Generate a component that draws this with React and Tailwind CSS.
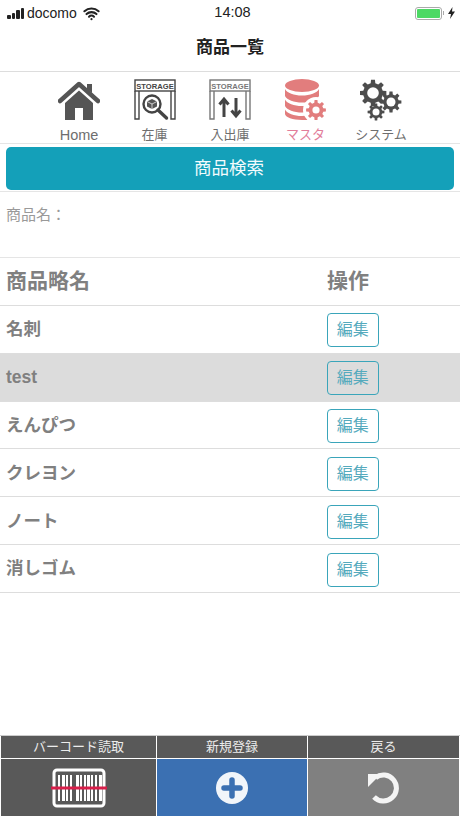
import { Wifi } from "lucide-react";

const font = { fontFamily: '"Liberation Sans", "Noto Sans CJK JP", sans-serif' };

const rows = [
  { name: "名刺" },
  { name: "test", active: true },
  { name: "えんぴつ" },
  { name: "クレヨン" },
  { name: "ノート" },
  { name: "消しゴム" },
];

function gearPath(cx, cy, outer, inner, teeth) {
  const pts = [];
  const step = (Math.PI * 2) / teeth;
  for (let i = 0; i < teeth; i++) {
    const a = i * step;
    const w = step * 0.22;
    pts.push([a - w * 1.35, inner], [a - w * 0.85, outer], [a + w * 0.85, outer], [a + w * 1.35, inner]);
  }
  return (
    pts
      .map(([a, r], i) => `${i ? "L" : "M"}${(cx + r * Math.cos(a)).toFixed(2)} ${(cy + r * Math.sin(a)).toFixed(2)}`)
      .join(" ") + " Z"
  );
}

function Gear({ cx, cy, r, hole, fill, holeFill = "#fff" }) {
  return (
    <>
      <path d={gearPath(cx, cy, r, r * 0.74, 8)} fill={fill} />
      <circle cx={cx} cy={cy} r={hole} fill={holeFill} />
    </>
  );
}

function HomeIcon() {
  return (
    <svg width="42" height="41" viewBox="0 0 42 41">
      <path d="M29 4h5v9l-5-4z" fill="#555" />
      <path d="M2 21 21 4l19 17" fill="none" stroke="#555" strokeWidth="4.500" strokeLinecap="round" strokeLinejoin="round" />
      <path d="M7 23 21 10.500 35 23v17H25V28h-8v12H7z" fill="#555" />
    </svg>
  );
}

function StorageFrame({ color, children }) {
  return (
    <svg width="42" height="42" viewBox="0 0 42 42">
      <rect x="1" y="1" width="40" height="11" fill="#fff" stroke={color} strokeWidth="1.400" />
      <text x="21" y="9.500" textAnchor="middle" fontSize="7.600" fontWeight="700" fill={color} style={font}>
        STORAGE
      </text>
      <path d="M1 12v28h4V12M37 12v28h4V12" fill="none" stroke={color} strokeWidth="1.400" />
      {children}
    </svg>
  );
}

function StockIcon() {
  return (
    <StorageFrame color="#444">
      <circle cx="18" cy="25" r="8.500" fill="#fff" stroke="#444" strokeWidth="2.400" />
      <path d="m24 31 8.500 8" stroke="#444" strokeWidth="3.400" strokeLinecap="round" />
      <path d="m18 20 5 2.500v5L18 30l-5-2.500v-5z" fill="#555" />
      <path d="m13 22.500 5 2.500 5-2.500M18 25v5" stroke="#fff" strokeWidth="0.700" fill="none" />
    </StorageFrame>
  );
}

function InOutIcon() {
  return (
    <StorageFrame color="#777">
      <path d="M15 38V21M10.500 25.500 15 20l4.500 5.500" fill="none" stroke="#444" strokeWidth="3" />
      <path d="M27 19v17M22.500 31.500 27 37l4.500-5.500" fill="none" stroke="#444" strokeWidth="3" />
    </StorageFrame>
  );
}

function MasterIcon() {
  const c = "#e27d7d";
  return (
    <svg width="42" height="42" viewBox="0 0 42 42">
      <ellipse cx="17" cy="6.500" rx="17" ry="6.500" fill={c} />
      <path d="M0 10c2 4 9 6.500 17 6.500S32 14 34 10v7c-2 4-9 6.500-17 6.500S2 21 0 17z" fill={c} />
      <path d="M0 20.500c2 4 9 6.500 17 6.500s15-2.500 17-6.500V27c-2 4-9 6.500-17 6.500S2 31 0 27z" fill={c} />
      <path d="M0 30.500c2 4 9 6.500 17 6.500 2 0 4-.2 6-.5V41h-6C8 41 0 38 0 35z" fill={c} />
      <circle cx="31" cy="31" r="13" fill="#fff" />
      <Gear cx={31} cy={31} r={10} hole={3.600} fill={c} />
    </svg>
  );
}

function SystemIcon() {
  const c = "#4d4d4d";
  return (
    <svg width="42" height="42" viewBox="0 0 42 42">
      <Gear cx={13} cy={14} r={13.500} hole={5.800} fill={c} />
      <Gear cx={31} cy={23} r={10.500} hole={4.500} fill={c} />
      <Gear cx={16} cy={33} r={8.500} hole={3.500} fill={c} />
    </svg>
  );
}

function BarcodeIcon() {
  const bars = [2, 6, 10, 14, 20, 24, 28, 31, 35, 39, 43];
  return (
    <svg width="56" height="40" viewBox="0 0 56 40">
      <rect x="3" y="2" width="50" height="36" rx="3" fill="none" stroke="#fff" strokeWidth="3" />
      {bars.map((x, i) => (
        <rect key={x} x={x + 5} y="7" width={i % 3 === 1 ? 3 : 2} height="26" fill="#fff" />
      ))}
      <rect x="0" y="18.500" width="56" height="3" fill="#d81e4a" />
    </svg>
  );
}

function PlusIcon() {
  return (
    <svg width="32" height="32" viewBox="0 0 32 32">
      <circle cx="16" cy="16" r="16" fill="#f1f5fa" />
      <path d="M16 8v16M8 16h16" stroke="#3b70b2" strokeWidth="5.500" strokeLinecap="round" />
    </svg>
  );
}

function UndoIcon() {
  return (
    <svg width="32" height="32" viewBox="0 0 32 32">
      <path d="M7.500 5.700A13 13 0 1 1 6 25" fill="none" stroke="#f4f4f4" strokeWidth="5" />
      <path d="M0 2h13L0 15z" fill="#f4f4f4" />
    </svg>
  );
}

function NavItem({ icon, label, active, latin }) {
  return (
    <div className="flex w-[75.5px] flex-col items-center">
      <div className="flex h-[42px] items-center justify-center">{icon}</div>
      <span className={`mt-[4px] leading-[20px] ${latin ? "text-[14.5px]" : "text-[13px]"} ${active ? "text-[#e27d9a]" : "text-[#6e6e6e]"}`}>{label}</span>
    </div>
  );
}

function FooterCol({ label, bg, width, children }) {
  return (
    <div className={`flex flex-col gap-px ${width}`}>
      <div className="flex h-[22px] items-center justify-center bg-[#595959] text-[13px] text-[#ececec]">{label}</div>
      <div className={`flex h-[57px] items-center justify-center ${bg}`}>{children}</div>
    </div>
  );
}

export default function App() {
  return (
    <div style={font} className="flex h-[818px] w-[460px] flex-col overflow-hidden bg-white">
      <div className="flex h-[25px] items-center justify-between pl-[7px] pr-[5px] pt-[1px] text-[14px] text-[#222]">
        <div className="flex w-[160px] items-center">
          <span className="flex items-end gap-[1px]">
            <i className="h-[4px] w-[3.500px] rounded-[1px] bg-[#222]" />
            <i className="h-[6px] w-[3.500px] rounded-[1px] bg-[#222]" />
            <i className="h-[9px] w-[3.500px] rounded-[1px] bg-[#222]" />
            <i className="h-[11px] w-[3.500px] rounded-[1px] bg-[#222]" />
          </span>
          <span className="ml-[3px]">docomo</span>
          <Wifi size={17} strokeWidth={3} className="ml-[6px] text-[#222]" />
        </div>
        <span className="ml-[3px] text-[14.5px] font-medium">14:08</span>
        <div className="flex w-[160px] items-center justify-end">
          <span className="flex h-[13px] w-[27px] items-center justify-center rounded-[3px] border border-[#aaa]">
            <i className="h-[9px] w-[23px] rounded-[1px] bg-[#4cd964]" />
          </span>
          <i className="ml-[1px] h-[4px] w-[1px] bg-[#aaa]" />
          <svg width="7" height="12" viewBox="0 0 7 12" className="ml-[4px]">
            <path d="M4.500 0 0 7h3l-1 5 5-7.500H4z" fill="#222" />
          </svg>
        </div>
      </div>

      <div className="flex h-[47px] items-center justify-center border-b border-[#ddd] text-[17px] font-bold text-[#222]">
        商品一覧
      </div>

      <div className="flex h-[72px] items-start justify-center border-b border-[#e5e5e5] pt-[7px]">
        <NavItem icon={<HomeIcon />} label="Home" latin />
        <NavItem icon={<StockIcon />} label="在庫" />
        <NavItem icon={<InOutIcon />} label="入出庫" />
        <NavItem icon={<MasterIcon />} label="マスタ" active />
        <NavItem icon={<SystemIcon />} label="システム" />
      </div>

      <div className="h-[48px] border-b border-[#e5e5e5] px-[6px] pt-[3px]">
        <button className="flex h-[43px] w-full items-center justify-center rounded-[5px] bg-[#14a0b9] pr-[2px] text-[17.5px] text-[#f2fbfd]">
          商品検索
        </button>
      </div>

      <div className="h-[66px] border-b border-[#e5e5e5] px-[6px] pt-[13px] text-[15px] leading-[20px] text-[#999]">商品名：</div>

      <div className="flex h-[48px] items-center border-b border-[#ddd] pb-[2px] pl-[6px] text-[21px] font-bold text-[#808080]">
        <span className="w-[321px]">商品略名</span>
        <span>操作</span>
      </div>

      {rows.map((row) => (
        <div
          key={row.name}
          className={`flex h-[47.830px] items-center border-b border-[#ddd] pl-[6px] text-[17.5px] font-bold text-[#808080] ${row.active ? "bg-[#dcdcdc]" : ""}`}
        >
          <span className="w-[321px]">{row.name}</span>
          <button className="mt-[2px] flex h-[34px] w-[51.500px] items-center justify-center rounded-[4px] border border-[#3aa5ba] text-[16px] font-normal text-[#55aabd]">
            編集
          </button>
        </div>
      ))}

      <div className="flex-1" />

      <div className="mb-[2px] flex gap-px border-t border-[#ccc] pl-px">
        <FooterCol label="バーコード読取" bg="bg-[#595959]" width="w-[155px]"><BarcodeIcon /></FooterCol>
        <FooterCol label="新規登録" bg="bg-[#3b70b2]" width="w-[150px]"><PlusIcon /></FooterCol>
        <FooterCol label="戻る" bg="bg-[#808080]" width="w-[151px]"><UndoIcon /></FooterCol>
      </div>
    </div>
  );
}
